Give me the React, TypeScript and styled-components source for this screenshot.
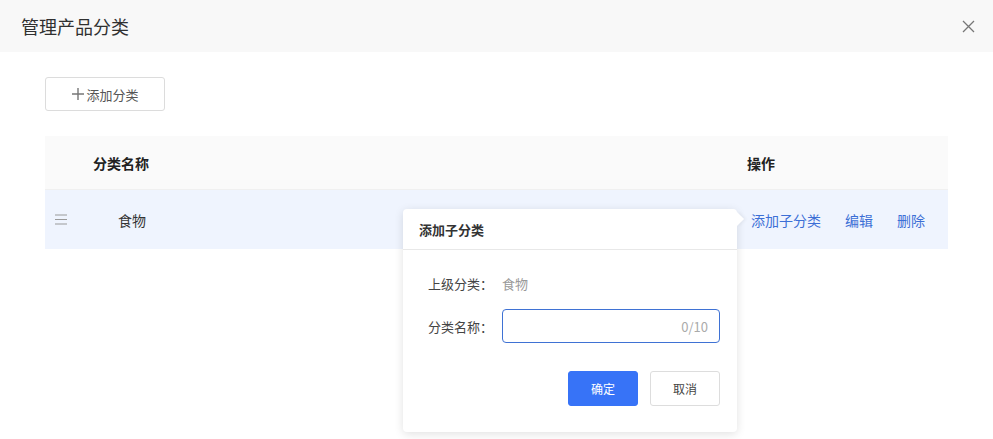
import styled, { createGlobalStyle } from "styled-components";

const GlobalStyle = createGlobalStyle`
  * { margin: 0; padding: 0; box-sizing: border-box; }
  body {
    background: #ffffff;
    font-family: "Noto Sans CJK SC", "Noto Sans", "Liberation Sans", sans-serif;
    color: #333333;
  }
`;

const Dialog = styled.div`
  width: 993px;
  height: 439px;
  background: #ffffff;
  overflow: hidden;
`;

const Header = styled.div`
  height: 52px;
  background: #f8f8f8;
  display: flex;
  align-items: center;
  justify-content: space-between;
  padding: 0 16px 0 21px;
`;

const Title = styled.h1`
  font-size: 18px;
  font-weight: 400;
  color: #303030;
  line-height: 1;
`;

const CloseButton = styled.button`
  border: none;
  background: none;
  width: 18px;
  height: 18px;
  display: flex;
  align-items: center;
  justify-content: center;
  cursor: pointer;
`;

const Body = styled.div`
  padding: 25px 45px 0;
`;

const AddButton = styled.button`
  width: 120px;
  height: 34px;
  border: 1px solid #dcdcdc;
  border-radius: 3px;
  background: #ffffff;
  color: #555555;
  font-family: inherit;
  font-size: 13px;
  display: flex;
  align-items: center;
  justify-content: center;
  margin-bottom: 25px;
`;

const Table = styled.div`
  position: relative;
  width: 903px;
`;

const Row = styled.div<{ $head?: boolean }>`
  display: grid;
  grid-template-columns: 48px 654px 1fr;
  align-items: center;
  height: ${(p) => (p.$head ? "53px" : "60px")};
  background: ${(p) => (p.$head ? "#fafafa" : "#eff4fe")};
  border-top: ${(p) => (p.$head ? "none" : "1px solid #f0f0f0")};
  font-size: 14px;
`;

const HeadCell = styled.div`
  font-weight: 700;
  color: #222222;
  font-size: 14px;
`;

const Handle = styled.div`
  padding-left: 10px;
  display: flex;
  align-items: center;
`;

const NameCell = styled.div`
  padding-left: 25px;
  color: #333333;
`;

const Actions = styled.div`
  display: flex;
  gap: 24px;
  padding-left: 4px;
`;

const Link = styled.a`
  color: #3c6fd6;
  font-size: 14px;
  text-decoration: none;
  cursor: pointer;
`;

const Popover = styled.div`
  position: absolute;
  left: 358px;
  top: 73px;
  width: 334px;
  height: 223px;
  background: #ffffff;
  border-radius: 4px;
  box-shadow: 0 2px 10px rgba(0, 0, 0, 0.12);

  &::after {
    content: "";
    position: absolute;
    right: -5px;
    top: 5px;
    width: 10px;
    height: 10px;
    background: #ffffff;
    transform: rotate(45deg);
    box-shadow: 2px -2px 3px rgba(0, 0, 0, 0.04);
  }
`;

const PopHead = styled.div`
  height: 41px;
  border-bottom: 1px solid #e8e8e8;
  display: flex;
  align-items: center;
  padding-left: 16px;
  font-size: 13px;
  font-weight: 700;
  color: #333333;
`;

const PopBody = styled.div`
  padding: 16px 17px 0 25px;
  display: flex;
  flex-direction: column;
`;

const Field = styled.div`
  display: flex;
  align-items: center;
  height: 34px;
  margin-bottom: 9px;
`;

const Label = styled.span`
  width: 74px;
  font-size: 13px;
  color: #444444;
`;

const Value = styled.span`
  font-size: 13px;
  color: #999999;
`;

const InputBox = styled.div`
  width: 219px;
  height: 34px;
  border: 1px solid #3f72d4;
  border-radius: 4px;
  display: flex;
  align-items: center;
  justify-content: flex-end;
  padding-right: 11px;
`;

const Counter = styled.span`
  font-size: 13px;
  color: #aaaaaa;
`;

const Footer = styled.div`
  display: flex;
  justify-content: flex-end;
  gap: 12px;
  margin-top: 19px;
`;

const Btn = styled.button<{ $primary?: boolean }>`
  width: 70px;
  height: 35px;
  border-radius: 3px;
  font-family: inherit;
  font-size: 12px;
  border: 1px solid ${(p) => (p.$primary ? "#3773f7" : "#dddddd")};
  background: ${(p) => (p.$primary ? "#3773f7" : "#ffffff")};
  color: ${(p) => (p.$primary ? "#ffffff" : "#444444")};
`;

export default function App() {
  return (
    <>
      <GlobalStyle />
      <Dialog>
        <Header>
          <Title>管理产品分类</Title>
          <CloseButton aria-label="关闭">
            <svg width="13" height="13" viewBox="0 0 13 13">
              <path d="M1 1L12 12M12 1L1 12" stroke="#777" strokeWidth="1.3" fill="none" />
            </svg>
          </CloseButton>
        </Header>
        <Body>
          <AddButton>
            <svg width="15" height="14" viewBox="0 0 15 14">
              <path d="M7 1V13M1 7H13" stroke="#777" strokeWidth="1.4" />
            </svg>
            添加分类
          </AddButton>
          <Table>
            <Row $head>
              <div />
              <HeadCell>分类名称</HeadCell>
              <HeadCell>操作</HeadCell>
            </Row>
            <Row>
              <Handle>
                <svg width="12" height="11" viewBox="0 0 12 11">
                  <path d="M0 1H12M0 5.5H12M0 10H12" stroke="#9a9a9a" strokeWidth="1.2" />
                </svg>
              </Handle>
              <NameCell>食物</NameCell>
              <Actions>
                <Link>添加子分类</Link>
                <Link>编辑</Link>
                <Link>删除</Link>
              </Actions>
            </Row>
            <Popover>
              <PopHead>添加子分类</PopHead>
              <PopBody>
                <Field>
                  <Label>上级分类：</Label>
                  <Value>食物</Value>
                </Field>
                <Field>
                  <Label>分类名称：</Label>
                  <InputBox>
                    <Counter>0/10</Counter>
                  </InputBox>
                </Field>
                <Footer>
                  <Btn $primary>确定</Btn>
                  <Btn>取消</Btn>
                </Footer>
              </PopBody>
            </Popover>
          </Table>
        </Body>
      </Dialog>
    </>
  );
}
